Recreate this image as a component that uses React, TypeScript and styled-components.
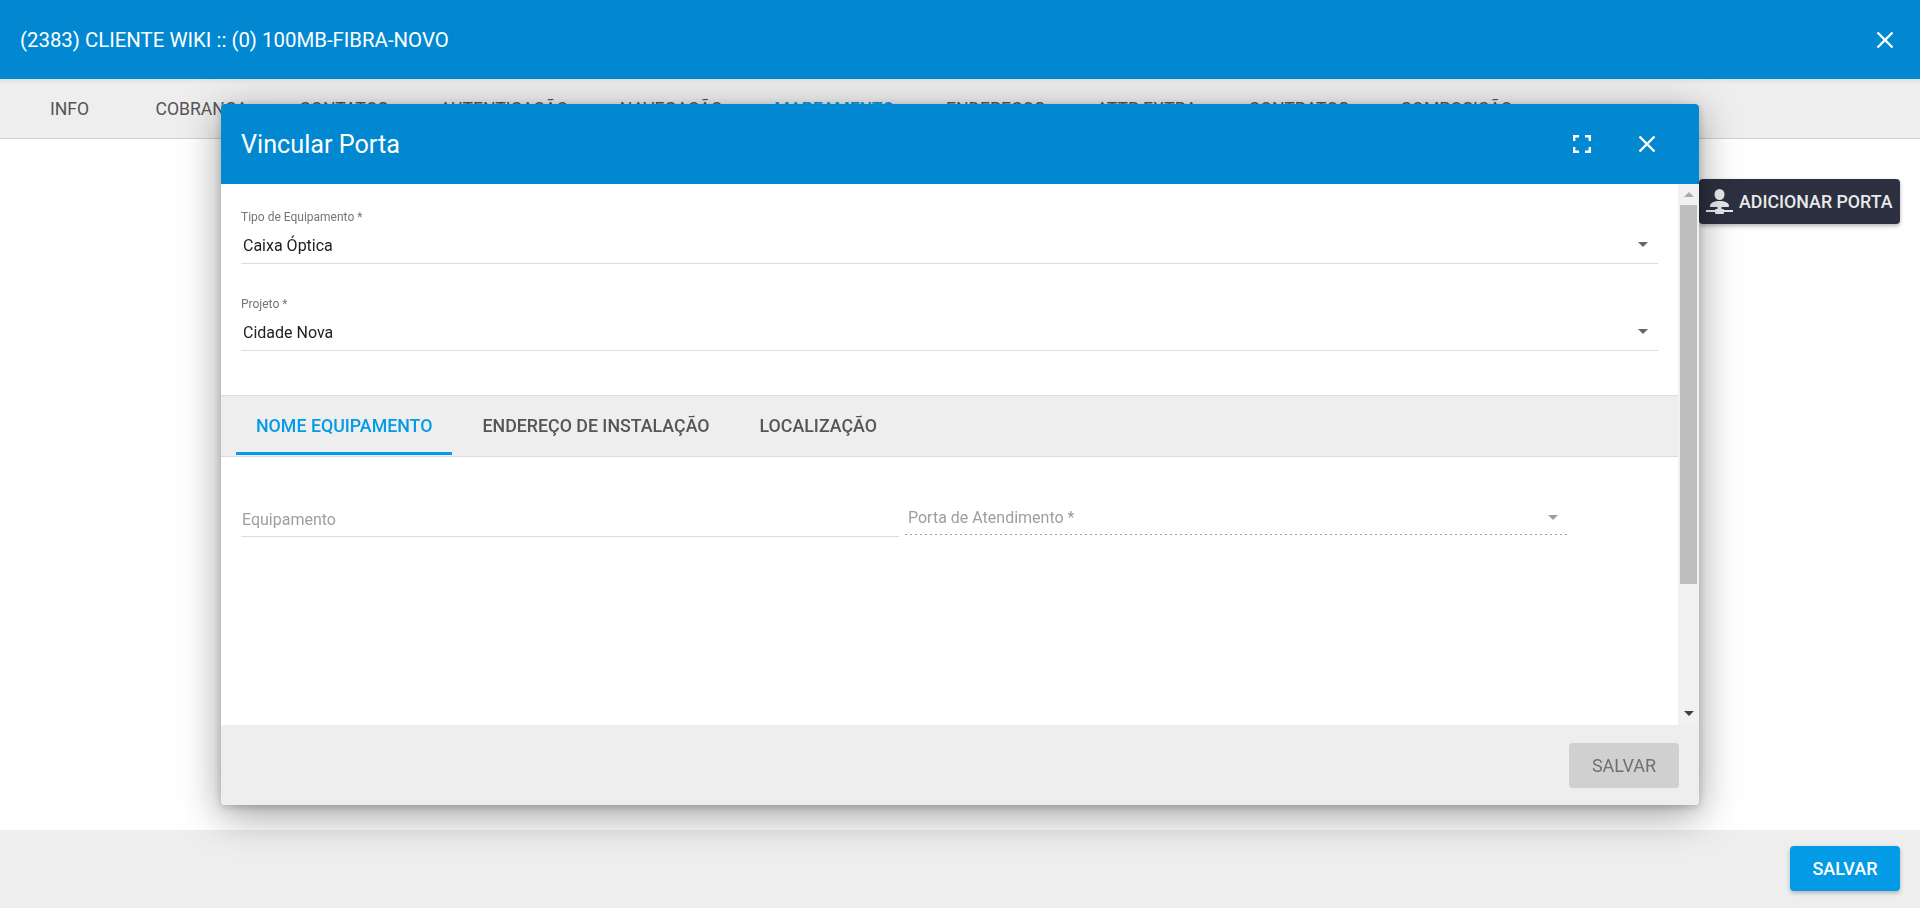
import styled, { createGlobalStyle } from "styled-components"

const GlobalStyle = createGlobalStyle`
  html, body {
    margin: 0;
    padding: 0;
    height: 100%;
    overflow: hidden;
    background: #ffffff;
    font-family: Roboto, "Liberation Sans", sans-serif;
  }
  * {
    box-sizing: border-box;
  }
`

const Page = styled.div`
  height: 908px;
  display: flex;
  flex-direction: column;
`

const TopBar = styled.header`
  height: 79px;
  background: #0288d1;
  color: #ffffff;
  display: flex;
  align-items: center;
  justify-content: space-between;
  padding: 0 25px 0 20px;
`

const TopTitle = styled.h1`
  margin: 0;
  font-size: 20.4px;
  font-weight: 400;
`

const IconButton = styled.button`
  width: 20px;
  height: 20px;
  padding: 0;
  border: 0;
  background: none;
  color: #ffffff;
  display: flex;
  align-items: center;
  justify-content: center;
`

const PageTabs = styled.nav`
  height: 60px;
  background: #eeeeee;
  border-bottom: 1px solid #cfcfcf;
  display: flex;
  align-items: center;
  padding-left: 25px;
  box-shadow: inset 0 6px 6px -6px rgba(0, 0, 0, 0.12);
`

const PageTab = styled.span<{ $active?: boolean }>`
  min-width: 104px;
  padding: 0 25px;
  margin-right: 1.5px;
  font-size: 17.6px;
  font-weight: ${p => (p.$active ? 500 : 400)};
  color: ${p => (p.$active ? "#039be5" : "#555555")};
  white-space: nowrap;
`

const Content = styled.main`
  flex: 1;
  display: flex;
  justify-content: flex-end;
  align-items: flex-start;
  padding: 40px 20px 0;
`

const AddButton = styled.button`
  width: 201px;
  height: 45px;
  display: flex;
  align-items: center;
  gap: 6px;
  padding: 0 0 0 7px;
  border: 0;
  border-radius: 4px;
  background: #2d3040;
  color: #eaeaea;
  font-family: inherit;
  font-size: 17.8px;
  font-weight: 500;
  white-space: nowrap;
  box-shadow: 0 2px 4px rgba(0, 0, 0, 0.3);
`

const PageFooter = styled.footer`
  height: 78px;
  background: #eeeeee;
  display: flex;
  align-items: center;
  justify-content: flex-end;
  padding: 0 20px 1px;
`

const SaveButton = styled.button<{ $disabled?: boolean }>`
  width: 110px;
  height: 45px;
  border: 0;
  border-radius: 4px;
  font-family: inherit;
  font-size: 18px;
  font-weight: ${p => (p.$disabled ? 400 : 500)};
  color: ${p => (p.$disabled ? "#707070" : "#ffffff")};
  background: ${p => (p.$disabled ? "#d0d0d0" : "#039be5")};
  box-shadow: ${p => (p.$disabled ? "none" : "0 2px 4px rgba(0, 0, 0, 0.25)")};
`

const Modal = styled.section`
  position: fixed;
  top: 104px;
  left: 221px;
  width: 1478px;
  height: 701px;
  display: flex;
  flex-direction: column;
  border-radius: 4px;
  overflow: hidden;
  background: #ffffff;
  box-shadow: 0 10px 40px rgba(0, 0, 0, 0.38), 0 2px 8px rgba(0, 0, 0, 0.2);
`

const ModalHeader = styled.header`
  height: 80px;
  flex: none;
  background: #0288d1;
  color: #ffffff;
  display: flex;
  align-items: center;
  padding: 0 42px 0 20px;
  gap: 45px;
`

const ModalTitle = styled.h2`
  margin: 0 auto 0 0;
  font-size: 25.2px;
  font-weight: 400;
`

const ModalBody = styled.div`
  flex: 1;
  min-height: 0;
  display: flex;
`

const ModalScroll = styled.div`
  flex: 1;
  min-width: 0;
  display: flex;
  flex-direction: column;
`

const SelectGroup = styled.div`
  height: 211px;
  padding: 26px 20px 0;
  display: flex;
  flex-direction: column;
  gap: 33px;
`

const Field = styled.div`
  display: flex;
  flex-direction: column;
`

const FieldLabel = styled.label`
  height: 14px;
  font-size: 12px;
  line-height: 14px;
  color: #757575;
`

const SelectBox = styled.div`
  height: 40px;
  padding: 8px 10px 0 2px;
  border-bottom: 1px solid #dddddd;
  display: flex;
  align-items: flex-start;
  justify-content: space-between;
  font-size: 16px;
  line-height: 28px;
  color: #212121;
`

const Caret = styled.span<{ $muted?: boolean }>`
  width: 0;
  height: 0;
  margin-top: 10px;
  border-left: 5px solid transparent;
  border-right: 5px solid transparent;
  border-top: 5px solid ${p => (p.$muted ? "#9e9e9e" : "#666666")};
`

const InnerTabs = styled.div`
  height: 62px;
  flex: none;
  background: #eeeeee;
  border-top: 1px solid #dddddd;
  border-bottom: 1px solid #dddddd;
  display: flex;
  padding-left: 15px;
  gap: 10px;
`

const InnerTab = styled.div<{ $active?: boolean }>`
  height: 59px;
  padding: 2px 20px 0;
  display: flex;
  align-items: center;
  font-size: 17.8px;
  font-weight: 500;
  white-space: nowrap;
  color: ${p => (p.$active ? "#039be5" : "#555555")};
  border-bottom: 3px solid ${p => (p.$active ? "#039be5" : "transparent")};
`

const FormRow = styled.div`
  padding: 48px 0 0 20px;
  display: grid;
  grid-template-columns: 658px 662px;
  column-gap: 6px;
  align-items: start;
`

const TextInput = styled.div`
  height: 30px;
  margin-top: 2px;
  padding-left: 1px;
  border-bottom: 1px solid #dddddd;
  font-size: 16px;
  line-height: 26px;
  color: #9e9e9e;
`

const DisabledSelect = styled.div`
  height: 30px;
  padding: 0 9px 0 3px;
  background: repeating-linear-gradient(90deg, #9e9e9e 0 2px, transparent 2px 5px) left bottom / 100% 1px no-repeat;
  display: flex;
  align-items: flex-start;
  justify-content: space-between;
  font-size: 16px;
  line-height: 26px;
  color: #9e9e9e;
`

const ScrollTrack = styled.div`
  width: 21px;
  flex: none;
  background: #f1f1f1;
  display: flex;
  flex-direction: column;
  align-items: center;
`

const ScrollArrow = styled.span<{ $up?: boolean }>`
  width: 0;
  height: 0;
  margin: ${p => (p.$up ? "8px 0 8px" : "auto 0 9px")};
  border-left: 5px solid transparent;
  border-right: 5px solid transparent;
  border-top: ${p => (p.$up ? "0" : "5px solid #404040")};
  border-bottom: ${p => (p.$up ? "5px solid #a8a8a8" : "0")};
`

const ScrollThumb = styled.div`
  width: 17px;
  height: 379px;
  background: #bdbdbd;
`

const ModalFooter = styled.footer`
  height: 80px;
  flex: none;
  background: #eeeeee;
  display: flex;
  align-items: flex-start;
  justify-content: flex-end;
  padding: 18px 20px 0 0;
`

const CloseIcon = ({ size }: { size: number }) => (
  <svg width={size} height={size} viewBox="0 0 18 18" fill="none" stroke="currentColor" strokeWidth="2.4">
    <path d="M1.5 1.500L16.5 16.500M16.5 1.500L1.500 16.500" />
  </svg>
)

const ExpandIcon = () => (
  <svg width="18" height="18" viewBox="0 0 18 18" fill="none" stroke="currentColor" strokeWidth="2.4">
    <path d="M1.2 6V1.2H6M12 1.2H16.8V6M16.8 12V16.8H12M6 16.8H1.2V12" />
  </svg>
)

const PersonPortIcon = () => (
  <svg width="27" height="26" viewBox="0 0 27 26" fill="currentColor">
    <ellipse cx="13.5" cy="5.5" rx="5" ry="5.5" />
    <path d="M4 17c0-3.4 4.4-5 9.5-5s9.5 1.600 9.500 5c0 .6-.4 1-1 1h-17c-.6 0-1-.4-1-1z" />
    <rect x="11.500" y="18" width="4" height="4" />
    <rect x="0" y="21" width="27" height="2" />
    <rect x="9" y="20" width="9" height="5" rx="1" />
  </svg>
)

const pageTabs = [
  "INFO",
  "COBRANÇA",
  "CONTATOS",
  "AUTENTICAÇÃO",
  "NAVEGAÇÃO",
  "MAPEAMENTO",
  "ENDEREÇOS",
  "ATTR EXTRA",
  "CONTRATOS",
  "COMPOSIÇÃO",
]

const App = (): JSX.Element => {
  return (
    <Page>
      <GlobalStyle />
      <TopBar>
        <TopTitle>(2383) CLIENTE WIKI :: (0) 100MB-FIBRA-NOVO</TopTitle>
        <IconButton><CloseIcon size={18} /></IconButton>
      </TopBar>
      <PageTabs>
        {pageTabs.map(tab => (
          <PageTab key={tab} $active={tab === "MAPEAMENTO"}>{tab}</PageTab>
        ))}
      </PageTabs>
      <Content>
        <AddButton>
          <PersonPortIcon />
          ADICIONAR PORTA
        </AddButton>
      </Content>
      <PageFooter>
        <SaveButton>SALVAR</SaveButton>
      </PageFooter>

      <Modal>
        <ModalHeader>
          <ModalTitle>Vincular Porta</ModalTitle>
          <IconButton><ExpandIcon /></IconButton>
          <IconButton><CloseIcon size={18} /></IconButton>
        </ModalHeader>
        <ModalBody>
          <ModalScroll>
            <SelectGroup>
              <Field>
                <FieldLabel>Tipo de Equipamento *</FieldLabel>
                <SelectBox>Caixa Óptica<Caret /></SelectBox>
              </Field>
              <Field>
                <FieldLabel>Projeto *</FieldLabel>
                <SelectBox>Cidade Nova<Caret /></SelectBox>
              </Field>
            </SelectGroup>
            <InnerTabs>
              <InnerTab $active>NOME EQUIPAMENTO</InnerTab>
              <InnerTab>ENDEREÇO DE INSTALAÇÃO</InnerTab>
              <InnerTab>LOCALIZAÇÃO</InnerTab>
            </InnerTabs>
            <FormRow>
              <TextInput>Equipamento</TextInput>
              <DisabledSelect>Porta de Atendimento *<Caret $muted /></DisabledSelect>
            </FormRow>
          </ModalScroll>
          <ScrollTrack>
            <ScrollArrow $up />
            <ScrollThumb />
            <ScrollArrow />
          </ScrollTrack>
        </ModalBody>
        <ModalFooter>
          <SaveButton $disabled>SALVAR</SaveButton>
        </ModalFooter>
      </Modal>
    </Page>
  )
}

export default App
